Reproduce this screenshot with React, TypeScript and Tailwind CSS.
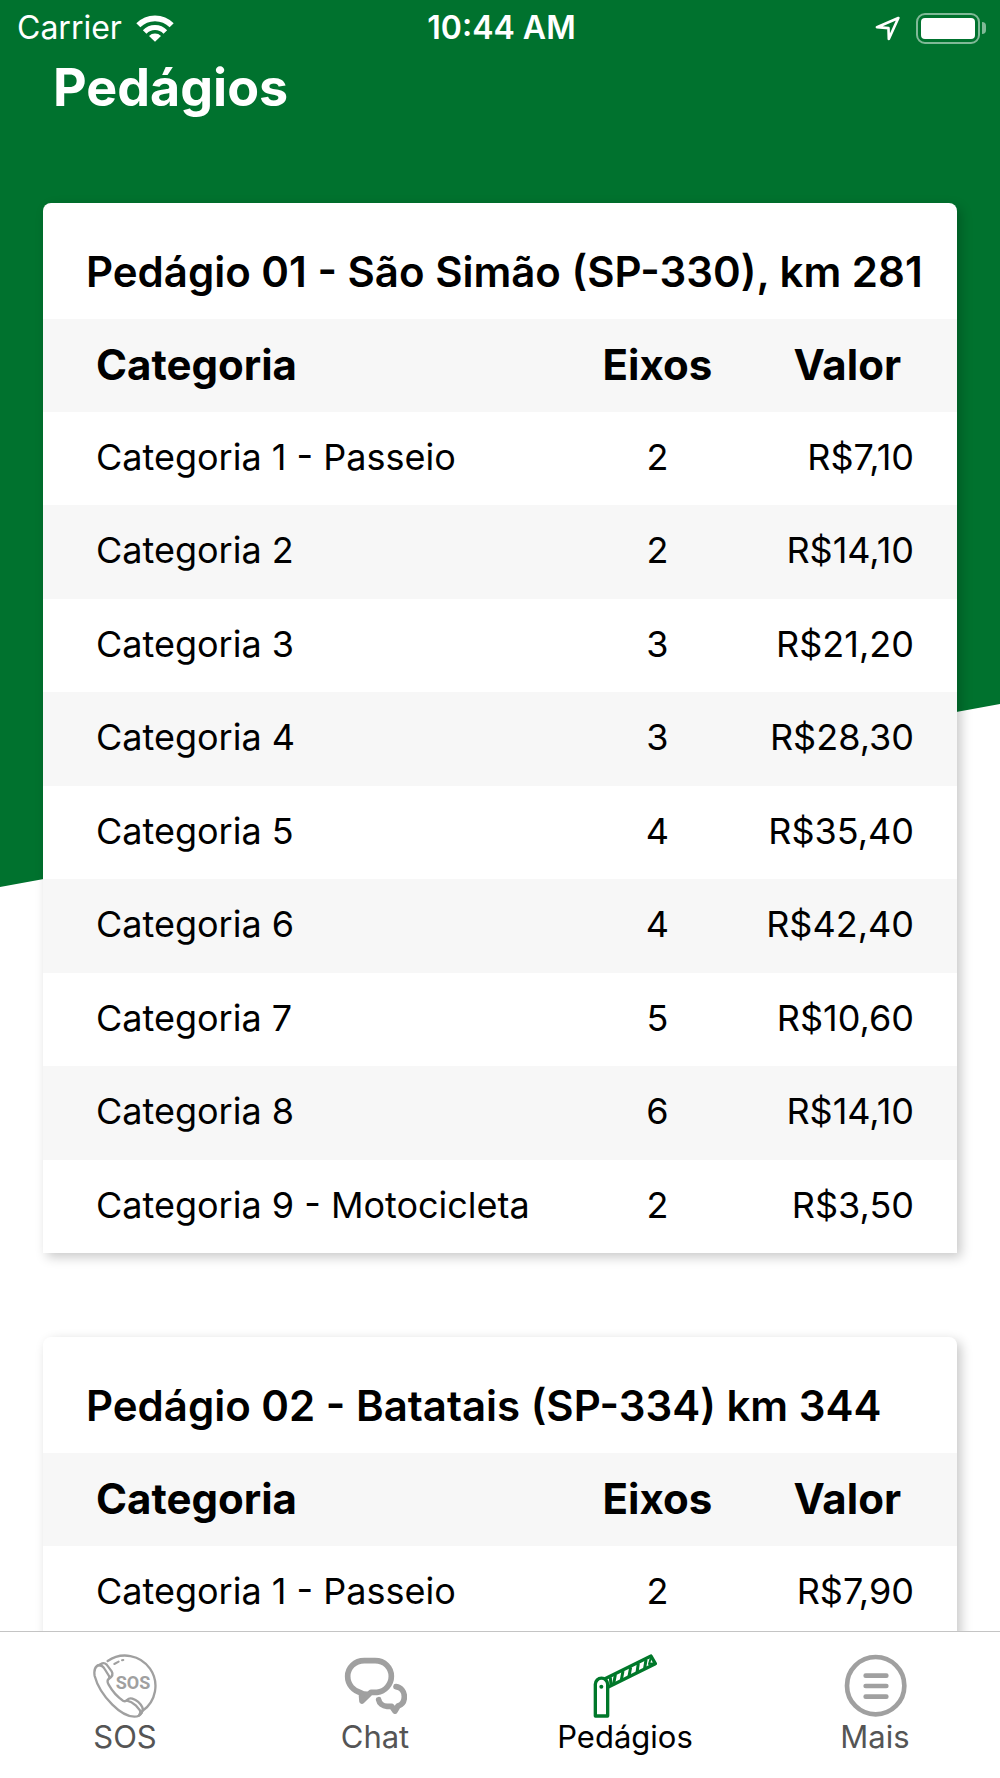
type Toll = {
  category: string;
  axles: number;
  price: string;
};

type Plaza = {
  title: string;
  tolls: Toll[];
};

const plazas: Plaza[] = [
  {
    title: "Pedágio 01 - São Simão (SP-330), km 281",
    tolls: [
      { category: "Categoria 1 - Passeio", axles: 2, price: "R$7,10" },
      { category: "Categoria 2", axles: 2, price: "R$14,10" },
      { category: "Categoria 3", axles: 3, price: "R$21,20" },
      { category: "Categoria 4", axles: 3, price: "R$28,30" },
      { category: "Categoria 5", axles: 4, price: "R$35,40" },
      { category: "Categoria 6", axles: 4, price: "R$42,40" },
      { category: "Categoria 7", axles: 5, price: "R$10,60" },
      { category: "Categoria 8", axles: 6, price: "R$14,10" },
      { category: "Categoria 9 - Motocicleta", axles: 2, price: "R$3,50" },
    ],
  },
  {
    title: "Pedágio 02 - Batatais (SP-334) km 344",
    tolls: [{ category: "Categoria 1 - Passeio", axles: 2, price: "R$7,90" }],
  },
];

const WifiIcon = () => (
  <svg className="w-[38px] h-[27px]" viewBox="0 0 112 81" fill="none" stroke="white">
    <path d="M6 31A70 70 0 0 1 106 31" strokeWidth="17" />
    <path d="M25 51A43 43 0 0 1 87 51" strokeWidth="15" />
    <path d="M56 80L38 63A26 26 0 0 1 74 63Z" fill="white" stroke="none" />
  </svg>
);

const LocationIcon = () => (
  <svg className="w-[25px] h-[25px]" viewBox="0 0 76 74" fill="none" stroke="white" strokeWidth="8" strokeLinejoin="round">
    <path d="M71 5L6 33L41 36L42 69Z" />
  </svg>
);

const Battery = () => (
  <div className="flex items-center gap-[2px]">
    <div className="w-16 h-[31px] rounded-[9px] border-2 border-white/50 p-[3px]">
      <div className="h-full rounded-sm bg-white" />
    </div>
    <div className="w-1 h-3 rounded-r-full bg-white/50" />
  </div>
);

const SosIcon = () => (
  <svg className="size-16" viewBox="0 0 192 192" fill="none" stroke="#a0a0a0" strokeWidth="7" strokeLinecap="round" strokeLinejoin="round">
    <path d="M44 21A91 91 0 1 1 148 171" />
    <path d="M12 36C4 42 3 54 5 66C13 96 34 128 58 152C80 174 104 188 124 188C134 188 142 184 146 176" />
    <path d="M12 36L28 28C33 26 37 28 41 32L56 52C61 60 58 68 47 75C42 79 43 85 47 92C57 110 72 128 90 140C95 143 99 142 102 138C107 133 112 132 118 134C130 138 142 148 148 160C151 166 149 171 146 176L138 184" />
    <path d="M14 34C24 33 31 38 35 45L48 66C50 69 50 71 48 73" />
    <path d="M102 140C111 142 120 147 128 154L140 168C143 172 143 176 140 180" />
    <path d="M64 30L77 23M87 19L91 18" strokeWidth="6" />
    <text x="120" y="105" textAnchor="middle" fill="#a0a0a0" stroke="none" fontSize="54" fontWeight="700" fontFamily="Roboto, sans-serif">
      SOS
    </text>
  </svg>
);

const ChatIcon = () => (
  <svg className="size-16" viewBox="0 0 192 192" fill="none" stroke="#a0a0a0" strokeWidth="17" strokeLinecap="round" strokeLinejoin="round">
    <path d="M64 20H96C125 20 145 41 145 67C145 92 126 112 102 115H84L57 141L55 117C31 111 14 92 14 67C14 41 35 20 64 20Z" />
    <path d="M57 142L56 116L80 118Z" fill="#a0a0a0" strokeWidth="10" />
    <path d="M159 98C174 100 184 113 184 128C184 142 177 152 165 156L156 171L146 157H132C119 156 109 148 107 137" />
  </svg>
);

const GateIcon = () => (
  <svg className="size-16" viewBox="0 0 192 192" fill="none" stroke="#00782a" strokeWidth="10" strokeLinejoin="round">
    <path d="M7 186V91A18 18 0 0 1 44 91V186Z" />
    <circle cx="25" cy="98" r="6" fill="#00782a" stroke="none" />
    <path d="M36 74L174 6L187 29L46 99" />
    <path d="M52 70L54 94M67 62L62 90M90 51L85 78M113 40L108 67M136 28L132 56M159 17L155 43" strokeWidth="9" />
    <path d="M174 10L168 30L184 28" strokeWidth="6" />
  </svg>
);

const MoreIcon = () => (
  <svg className="size-16" viewBox="0 0 192 192" fill="none" stroke="#a0a0a0" strokeWidth="14" strokeLinecap="round">
    <circle cx="98" cy="95" r="86" />
    <path d="M68 65H130M68 96H130M68 128H130" />
  </svg>
);

const tabs = [
  { label: "SOS", Icon: SosIcon },
  { label: "Chat", Icon: ChatIcon },
  { label: "Pedágios", Icon: GateIcon, active: true },
  { label: "Mais", Icon: MoreIcon },
];

const PlazaCard = ({ title, tolls }: Plaza) => (
  <section className="overflow-hidden rounded-t-lg bg-white shadow-[4px_4px_12px_rgba(0,0,0,0.22)]">
    <h2 className="pt-[45px] pb-[23px] pl-[43px] text-[42px] leading-[48px] font-semibold whitespace-nowrap">
      {title}
    </h2>
    <table className="w-full table-fixed">
      <thead>
        <tr className="h-[93px] bg-[#f7f7f7] text-[42px] leading-[48px]">
          <th className="w-[58%] pb-[2px] pl-[53px] text-left font-bold">Categoria</th>
          <th className="w-[18%] pb-[2px] pl-1 text-center font-bold">Eixos</th>
          <th className="pr-14 pb-[2px] text-right font-bold">Valor</th>
        </tr>
      </thead>
      <tbody>
        {tolls.map((toll) => (
          <tr key={toll.category} className="h-[93px] even:h-[94px] even:bg-[#f7f7f7] text-[36px] leading-[44px]">
            <td className="pb-1 pl-[53px]">{toll.category}</td>
            <td className="pb-1 pl-1 text-center">{toll.axles}</td>
            <td className="pr-[43px] pb-1 text-right">{toll.price}</td>
          </tr>
        ))}
      </tbody>
    </table>
  </section>
);

const App = () => {
  return (
    <div className="flex h-screen flex-col bg-white font-['Inter',sans-serif] text-black">
      <main className="relative min-h-0 flex-1 overflow-hidden">
        {/* slanted green backdrop behind the cards */}
        <div className="absolute inset-x-0 top-0 h-[888px] bg-[#00722e] [clip-path:polygon(0_0,100%_0,100%_704px,0_887px)]" />

        <div className="relative">
          <div className="grid h-14 grid-cols-[1fr_auto_1fr] items-center pr-[14px] pl-[17px] text-[32px] leading-[40px] text-white">
            <div className="flex items-center gap-[14px]">
              <span>Carrier</span>
              <WifiIcon />
            </div>
            <span className="font-semibold">10:44 AM</span>
            <div className="flex items-center justify-end gap-4">
              <LocationIcon />
              <Battery />
            </div>
          </div>

          <h1 className="px-[53px] text-[52px] leading-[64px] font-bold text-white">Pedágios</h1>

          <div className="flex flex-col gap-[84px] px-[43px] pt-[83px]">
            {plazas.map((plaza) => (
              <PlazaCard key={plaza.title} {...plaza} />
            ))}
          </div>
        </div>
      </main>

      <nav className="relative grid grid-cols-4 border-t border-[#c4c4c4] bg-white">
        {tabs.map(({ label, Icon, active }) => (
          <button
            key={label}
            type="button"
            className={`flex flex-col items-center pt-[22px] pb-[22px] text-[31px] leading-[38px] ${active ? "text-black" : "text-[#555555]"}`}
          >
            <Icon />
            {label}
          </button>
        ))}
      </nav>
    </div>
  );
};

export default App;
